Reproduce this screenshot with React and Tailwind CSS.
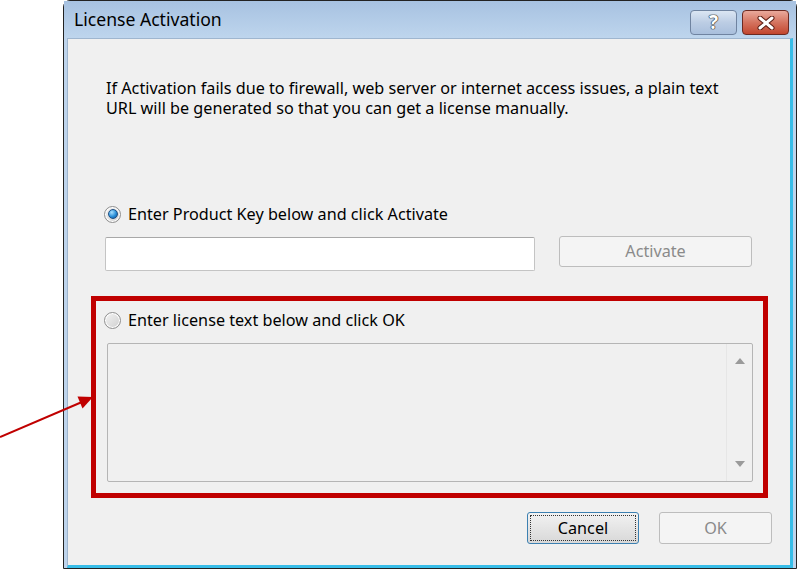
const font = { fontFamily: '"Noto Sans", "Open Sans", sans-serif' };

const Radio = ({ checked }) => (
  <span className="relative flex h-[17px] w-[17px] items-center justify-center rounded-full border border-[#8f8f8f] bg-gradient-to-br from-[#f4f4f4] to-[#cfcfcf] shadow-[inset_0_0_0_1px_#ffffff]">
    {checked && (
      <span className="h-[10px] w-[10px] rounded-full border border-[#1d4f85] bg-[radial-gradient(circle_at_35%_30%,#a8e0ff,#2a8fd8_55%,#0e4d93)]" />
    )}
  </span>
);

const TitleButton = ({ red, children }) => (
  <div
    className={
      "flex h-[25px] w-[47px] items-center justify-center rounded-[4px] border " +
      (red
        ? "border-[#6b2a22] bg-gradient-to-b from-[#e9a99c] via-[#d4735f] to-[#c2452d]"
        : "border-[#6f83a0] bg-gradient-to-b from-[#dbe6f3] via-[#bccde4] to-[#a9bfdc]")
    }
  >
    {children}
  </div>
);

export default function App() {
  return (
    <div className="relative h-[569px] w-[797px] overflow-hidden bg-white" style={font}>
      <div className="ml-[63px] flex h-[569px] w-[734px] flex-col rounded-t-[7px] border border-[#222222] bg-[#bed4ec]">
        {/* title bar */}
        <div className="flex h-[37px] items-center justify-between bg-gradient-to-b from-[#a7c2e1] to-[#bed5ed] pl-[10px] pr-[7px]">
          <span className="text-[17.6px] leading-none text-black">License Activation</span>
          <div className="flex gap-[5px] pt-[6px]">
            <TitleButton>
              <span className="text-[19px] font-bold leading-none text-white [text-shadow:0_0_1px_#333,0_0_1px_#333,0_0_1px_#333,0_0_1px_#333]">?</span>
            </TitleButton>
            <TitleButton red>
              <svg width="20" height="14" viewBox="0 0 20 14">
                <path d="M4 2 L16 12 M16 2 L4 12" stroke="#5a1b12" strokeWidth="5" strokeLinecap="round" />
                <path d="M4 2 L16 12 M16 2 L4 12" stroke="#ffffff" strokeWidth="3" strokeLinecap="round" />
              </svg>
            </TitleButton>
          </div>
        </div>

        {/* client area */}
        <div className="mx-[3px] flex flex-1 flex-col border border-[#9fb6cf] border-b-[3px] border-b-[#37bde8] border-r-[3px] border-r-[#37bde8] bg-[#f0f0f0] pl-[36px] text-[16.2px] text-black">
          <p className="ml-[2px] mt-[39px] leading-[20px]">
            If Activation fails due to firewall, web server or internet access issues, a plain text
            <br />
            URL will be generated so that you can get a license manually.
          </p>

          <div className="mt-[86px] flex h-[20px] items-center gap-[7px]">
            <Radio checked />
            <span>Enter Product Key below and click Activate</span>
          </div>

          <div className="ml-[1px] mt-[13px] flex items-start gap-[24px]">
            <div className="h-[34px] w-[430px] rounded-[2px] border border-[#c4c4c4] border-t-[#a8a8a8] bg-white" />
            <div className="-mt-[1px] flex h-[31px] w-[193px] items-center justify-center rounded-[3px] border border-[#bdbdbd] bg-[#f4f4f4] text-[#8a8a8a]">
              Activate
            </div>
          </div>

          {/* highlighted section */}
          <div className="-ml-[13px] mt-[25px] flex h-[202px] w-[677px] flex-col border-[5px] border-[#c00000] pl-[8px] pt-[9px]">
            <div className="flex h-[20px] items-center gap-[7px]">
              <Radio />
              <span>Enter license text below and click OK</span>
            </div>
            <div className="ml-[3px] mt-[13px] flex h-[139px] w-[646px] rounded-[2px] border border-[#b5b5b5] bg-[#f0f0f0]">
              <div className="flex-1" />
              <div className="flex w-[26px] flex-col items-center justify-between border-l border-[#e6e6e6] py-[14px]">
                <svg width="10" height="6" viewBox="0 0 10 6">
                  <path d="M0 6 L5 0 L10 6 Z" fill="#9a9a9a" />
                </svg>
                <svg width="10" height="6" viewBox="0 0 10 6">
                  <path d="M0 0 L10 0 L5 6 Z" fill="#9a9a9a" />
                </svg>
              </div>
            </div>
          </div>

          <div className="ml-[423px] mt-[14px] flex gap-[20px]">
            <div className="flex h-[32px] w-[112px] items-center justify-center rounded-[3px] border border-[#3c80b1] bg-gradient-to-b from-[#f2f2f2] to-[#d8d8d8] p-[2px]">
              <div className="flex h-full w-full items-center justify-center border border-dotted border-[#333333]">
                Cancel
              </div>
            </div>
            <div className="flex h-[32px] w-[113px] items-center justify-center rounded-[3px] border border-[#bdbdbd] bg-[#f4f4f4] text-[#8a8a8a]">
              OK
            </div>
          </div>
        </div>
      </div>

      {/* annotation arrow */}
      <svg className="absolute left-0 top-0" width="797" height="569">
        <line x1="0" y1="437" x2="82" y2="402" stroke="#c00000" strokeWidth="2" />
        <path d="M93 397 L77.5 396.5 L82.5 408.5 Z" fill="#c00000" />
      </svg>
    </div>
  );
}
